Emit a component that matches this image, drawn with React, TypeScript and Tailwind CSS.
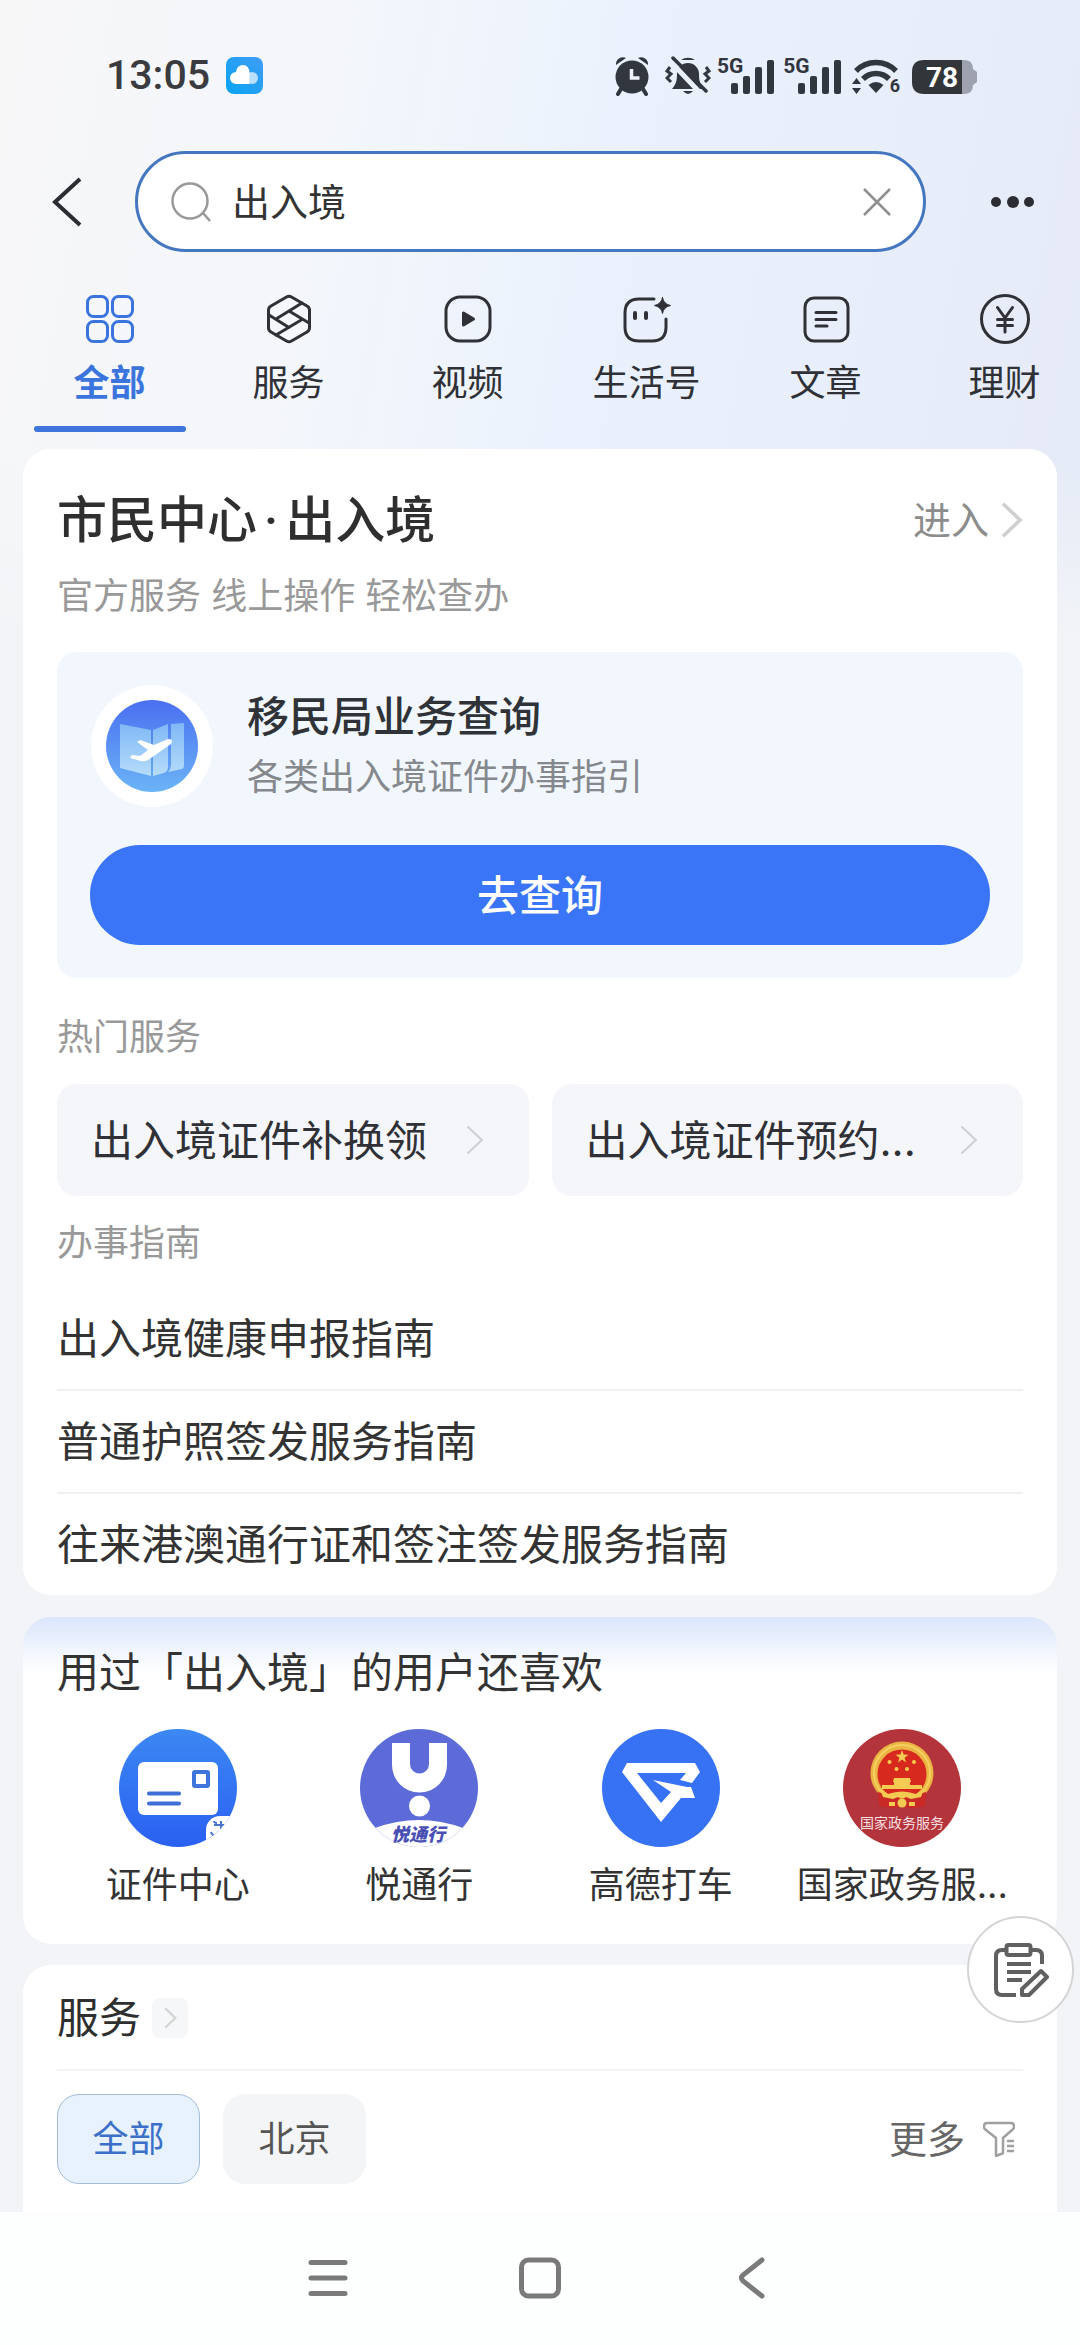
import { useState } from 'react';
import type { ReactNode } from 'react';

interface Tab {
  id: string;
  label: string;
  icon: ReactNode;
}

interface AppEntry {
  label: string;
  icon: ReactNode;
}

function AlarmIcon() {
  return (
    <svg viewBox="0 0 34 40" className="h-10 w-[34px]" aria-hidden="true">
      <circle cx="17" cy="21" r="16.500" fill="#32363f" />
      <path d="M1 9a7 7 0 0 1 10-7zM33 9a7 7 0 0 0-10-7z" fill="#32363f" />
      <path d="M6 33l-3 5M28 33l3 5" stroke="#32363f" strokeWidth="4" strokeLinecap="round" />
      <path d="M16.500 13v9h8" stroke="#eef2fb" strokeWidth="3.500" fill="none" />
    </svg>
  );
}

function MutedBellIcon() {
  return (
    <svg viewBox="0 0 46 40" className="h-10 w-[46px]" aria-hidden="true">
      <path d="M7 33c4-5 5-8 5-15a11 11 0 0 1 22 0c0 7 1 10 5 15z" fill="#32363f" />
      <path d="M18 35h10q-5 6-10 0z" fill="#32363f" />
      <path d="M16 4a12 12 0 0 1 14 0z" fill="#32363f" />
      <path d="M5 5l35 37" stroke="#e9effb" strokeWidth="5" />
      <path d="M8 2l33 33" stroke="#32363f" strokeWidth="3.500" strokeLinecap="round" />
      <path d="M5 11L2 15l4 3-4 4 4 4M41 11l3 4-4 3 4 4-4 4" stroke="#32363f" strokeWidth="3" fill="none" />
    </svg>
  );
}

function SignalIcon() {
  return (
    <div className="flex items-start">
      <span className="-mr-3 font-['Roboto',sans-serif] text-[21px] font-bold leading-5 text-[#32363f]">5G</span>
      <svg viewBox="0 0 44 40" className="h-10 w-11" fill="#32363f" aria-hidden="true">
        <rect x="0" y="27" width="7" height="11" rx="2" />
        <rect x="12" y="20" width="7" height="18" rx="2" />
        <rect x="24" y="11" width="7" height="27" rx="2" />
        <rect x="36" y="4" width="7" height="34" rx="2" />
      </svg>
    </div>
  );
}

function WifiIcon() {
  return (
    <div className="flex items-end">
      <svg viewBox="0 0 48 40" className="h-10 w-12" aria-hidden="true">
        <path d="M4 15a28 28 0 0 1 40 0" stroke="#32363f" strokeWidth="5.500" fill="none" />
        <path d="M11 23a18 18 0 0 1 26 0" stroke="#32363f" strokeWidth="5.500" fill="none" />
        <path d="M16.500 29q7.500-6 15 0L24 37z" fill="#32363f" />
        <path d="M0 28l4.500-6L9 28zM0 32h9l-4.500 6z" fill="#32363f" />
      </svg>
      <span className="-ml-2.5 font-['Roboto',sans-serif] text-[18px] font-bold leading-5 text-[#32363f]">6</span>
    </div>
  );
}

function BatteryIcon() {
  return (
    <svg viewBox="0 0 65 40" className="h-10 w-[65px]" aria-hidden="true">
      <path d="M50 4h2q9 0 9 9l4 3v10l-4 3q0 9-9 9h-2z" fill="#9da2ae" />
      <path d="M12 4h38v34H12Q0 38 0 26V16Q0 4 12 4z" fill="#32363b" />
      <text x="30" y="31" textAnchor="middle" fontSize="28" fontWeight="700" fill="#fff" className="font-['Roboto',sans-serif]">78</text>
    </svg>
  );
}

function CloudBadge() {
  return (
    <svg viewBox="0 0 37 37" className="size-[37px]" aria-hidden="true">
      <defs>
        <linearGradient id="cloud-bg" x1="0" y1="1" x2="1" y2="0">
          <stop offset="0" stopColor="#0aa4f2" />
          <stop offset="1" stopColor="#3f9cf5" />
        </linearGradient>
      </defs>
      <rect width="37" height="37" rx="8" fill="url(#cloud-bg)" />
      <rect x="20" y="15" width="12" height="12" rx="6" fill="#b9dffb" />
      <path d="M10 27a6 6 0 0 1 0-12q1-7 7-7 6 0 6.500 8V27z" fill="#fff" />
    </svg>
  );
}

function Chevron({ className, width = 2 }: { className: string; width?: number }) {
  return (
    <svg viewBox="0 0 12 20" className={className} fill="none" stroke="currentColor" strokeWidth={width} aria-hidden="true">
      <path d="M1 1l9.500 9L1 19" />
    </svg>
  );
}

const TABS: Tab[] = [
  {
    id: 'all',
    label: '全部',
    icon: (
      <>
        <rect x="2.500" y="2.500" width="20" height="20" rx="6" />
        <rect x="27.500" y="2.500" width="20" height="20" rx="6" />
        <rect x="2.500" y="27.500" width="20" height="20" rx="6" />
        <rect x="27.500" y="27.500" width="20" height="20" rx="6" />
      </>
    ),
  },
  {
    id: 'service',
    label: '服务',
    icon: (
      <>
        <path d="M22.500 3q2.500-1.500 5 0l15.500 9q2.500 1.500 2.500 4v18q0 2.500-2.500 4l-15.500 9q-2.500 1.500-5 0L7 38q-2.500-1.500-2.500-4V16q0-2.500 2.500-4z" />
        <path d="M38 9L12 25M5 21l20 12.500M25 17l20 12M38 25.500L12 41" />
      </>
    ),
  },
  {
    id: 'video',
    label: '视频',
    icon: (
      <>
        <rect x="3" y="3" width="44" height="44" rx="14" />
        <path d="M20.500 19v12l10-6z" fill="currentColor" />
      </>
    ),
  },
  {
    id: 'life',
    label: '生活号',
    icon: (
      <>
        <path d="M32 5H17Q3 5 3 19v14q0 14 14 14h13q14 0 14-14v-8" />
        <path d="M13 19v5M24 19v5" strokeWidth="4" />
        <path d="M40.500 3.500q1 6.500 8 8-7 1.500-8 8-1-6.500-8-8 7-1.500 8-8z" fill="currentColor" strokeWidth="1" />
      </>
    ),
  },
  {
    id: 'article',
    label: '文章',
    icon: (
      <>
        <rect x="4" y="4" width="43" height="43" rx="9" />
        <path d="M15 18.500h20M15 25.500h20M15 32h11" />
      </>
    ),
  },
  {
    id: 'finance',
    label: '理财',
    icon: (
      <>
        <circle cx="25" cy="25" r="23.500" />
        <path d="M17.500 13.500L25 24l7.500-10.500M25 24v14M17.500 25.500h15M17.500 31.500h15" />
      </>
    ),
  },
];

function MapBadge() {
  return (
    <svg viewBox="0 0 124 124" className="size-[124px] shrink-0" aria-hidden="true">
      <defs>
        <linearGradient id="map-bg" x1="0" y1="0" x2="0" y2="1">
          <stop offset="0" stopColor="#4a6ff0" />
          <stop offset="1" stopColor="#6bb4f6" />
        </linearGradient>
        <linearGradient id="map-leaf" x1="0" y1="0" x2="0" y2="1">
          <stop offset="0" stopColor="#7fb8f6" />
          <stop offset="1" stopColor="#b6dcfa" />
        </linearGradient>
      </defs>
      <circle cx="62" cy="62" r="61" fill="#fff" />
      <circle cx="62" cy="62" r="46" fill="url(#map-bg)" />
      <path d="M30 40l31 6v46l-31-8zM63 46l15-6v44q-1 4-4 5l-11 3zM81 40l13-1v43q0 2-2 3l-14 3q3-3 3-7z" fill="url(#map-leaf)" />
      <path d="M47 58q3-3 6-1l11 4 14-6q6 0 3 5L58 76q-4 2-7 1l-11-3 2-3 8 1 8-6z" fill="#fff" />
    </svg>
  );
}

function CardCenterIcon() {
  return (
    <svg viewBox="0 0 118 118" className="size-[118px]" aria-hidden="true">
      <defs>
        <linearGradient id="card-bg" x1="0" y1="0" x2="0" y2="1">
          <stop offset="0" stopColor="#3c88f3" />
          <stop offset="1" stopColor="#2a60f2" />
        </linearGradient>
        <clipPath id="card-clip">
          <circle cx="59" cy="59" r="59" />
        </clipPath>
      </defs>
      <g clipPath="url(#card-clip)">
        <rect width="118" height="118" fill="url(#card-bg)" />
        <rect x="19" y="33" width="80" height="53" rx="6" fill="#fff" />
        <rect x="75" y="43" width="14" height="14" rx="1" fill="#fff" stroke="#3f74dc" strokeWidth="4" />
        <path d="M30 64.500h30M30 74.500h30" stroke="#3f6fd6" strokeWidth="4" strokeLinecap="round" />
        <rect x="87" y="87" width="44" height="44" rx="14" fill="#fff" />
        <path d="M95 96h10M102 92v9M95 92q0 2 3 2M92 103q1 4 6 4" stroke="#4a73d0" strokeWidth="2" fill="none" />
      </g>
    </svg>
  );
}

function YuetongIcon() {
  return (
    <svg viewBox="0 0 118 118" className="size-[118px]" aria-hidden="true">
      <defs>
        <clipPath id="yue-clip">
          <circle cx="59" cy="59" r="59" />
        </clipPath>
      </defs>
      <g clipPath="url(#yue-clip)">
        <rect width="118" height="118" fill="#5c6bd8" />
        <path d="M0 118v-10l15-9q44-16 88 0l15 9v10z" fill="#fff" />
      </g>
      <path d="M32 14h18v21a9.500 9.500 0 0 0 19 0V14h18v22a27.500 27.500 0 0 1-55 0z" fill="#fff" />
      <circle cx="59.500" cy="77" r="10.500" fill="#fff" />
      <text x="58" y="112" textAnchor="middle" fontSize="18" fontWeight="900" fontStyle="italic" fill="#4a4fb4">悦通行</text>
    </svg>
  );
}

function GaodeIcon() {
  return (
    <svg viewBox="0 0 118 118" className="size-[118px]" aria-hidden="true">
      <circle cx="59" cy="59" r="59" fill="#3672f3" />
      <path d="M25 34h68l5 9-8 11-12-3 6-7H35l24 30 10-11-18-12 34 7h4l4 11H79L59 93 20 43z" fill="#fff" />
    </svg>
  );
}

function GovIcon() {
  return (
    <svg viewBox="0 0 118 118" className="size-[118px]" aria-hidden="true">
      <circle cx="59" cy="59" r="59" fill="#b3343b" />
      <circle cx="59" cy="44" r="31.500" fill="#eab543" />
      <circle cx="59" cy="44" r="28" fill="none" stroke="#f5d060" strokeWidth="2" />
      <path d="M35 63l10 3h28l10-3-1 14-11 2-12-1-12 1-11-2z" fill="#c92a26" />
      <circle cx="59" cy="45" r="24.500" fill="#d8291f" />
      <g fill="#f3cb52">
        <path d="M59 21l1.600 4.600 4.900.1-3.900 3 1.400 4.700-4-2.800-4 2.800 1.400-4.700-3.900-3 4.900-.1z" />
        <circle cx="46.500" cy="33" r="2" />
        <circle cx="71" cy="33" r="2" />
        <circle cx="53.500" cy="40" r="2" />
        <circle cx="64" cy="40" r="2" />
        <path d="M51 49h16l1 4h-1v3h12v4H39v-4h12v-3h-1z" />
        <path d="M37 60l8 5q14-5 28 0l8-5-3 8-10 2-5-2q-4 3-8 0l-5 2-10-2z" />
        <path d="M46 73h6v4h-6zM66 73h6v4h-6z" />
        <circle cx="59" cy="74" r="4.500" />
      </g>
      <text x="59" y="99" textAnchor="middle" fontSize="14" fill="#f6dfe0">国家政务服务</text>
    </svg>
  );
}

const GUIDES = ['出入境健康申报指南', '普通护照签发服务指南', '往来港澳通行证和签注签发服务指南'];

const HOT_SERVICES = ['出入境证件补换领', '出入境证件预约...'];

const RELATED: AppEntry[] = [
  { label: '证件中心', icon: <CardCenterIcon /> },
  { label: '悦通行', icon: <YuetongIcon /> },
  { label: '高德打车', icon: <GaodeIcon /> },
  { label: '国家政务服...', icon: <GovIcon /> },
];

const REGIONS = ['全部', '北京'];

function StatusBar() {
  return (
    <div className="flex h-[151px] items-center justify-between pl-[106px] pr-[103px]">
      <div className="flex items-center gap-4">
        <span className="font-['Roboto',sans-serif] text-[41px] font-medium leading-none text-[#3a3b3f]">13:05</span>
        <CloudBadge />
      </div>
      <div className="flex items-center">
        <AlarmIcon />
        <div className="ml-4 mr-1.5">
          <MutedBellIcon />
        </div>
        <div className="mr-2.5 flex gap-2">
          <SignalIcon />
          <SignalIcon />
        </div>
        <WifiIcon />
        <div className="ml-3">
          <BatteryIcon />
        </div>
      </div>
    </div>
  );
}

function SearchRow() {
  const [query, setQuery] = useState('出入境');

  return (
    <div className="flex h-[101px] items-center">
      <button type="button" aria-label="返回" className="flex w-[135px] shrink-0 items-center pl-[52px]">
        <svg viewBox="0 0 30 50" className="h-[50px] w-[30px]" fill="none" stroke="#2b2d33" strokeWidth="4" aria-hidden="true">
          <path d="M28 2L3 25l25 23" />
        </svg>
      </button>
      <form
        onSubmit={(e) => e.preventDefault()}
        className="flex h-full min-w-0 flex-1 items-center rounded-full border-[3px] border-[#4577c0] bg-white pl-[33px] pr-8"
      >
        <svg viewBox="0 0 40 40" className="size-10 shrink-0" fill="none" stroke="#999" strokeWidth="2.500" aria-hidden="true">
          <circle cx="19" cy="19" r="17.500" />
          <path d="M32 31l7 8" />
        </svg>
        <input
          type="text"
          aria-label="搜索"
          value={query}
          onChange={(e) => setQuery(e.target.value)}
          className="ml-[21px] h-14 min-w-0 flex-1 bg-transparent text-[38px] leading-[56px] text-[#333] outline-none"
        />
        <button type="button" aria-label="清除" onClick={() => setQuery('')}>
          <svg viewBox="0 0 28 28" className="size-7" stroke="#8f8f8f" strokeWidth="2.500" aria-hidden="true">
            <path d="M1 1l26 26M27 1L1 27" />
          </svg>
        </button>
      </form>
      <button type="button" aria-label="更多选项" className="flex w-[154px] shrink-0 items-center pl-16">
        <svg viewBox="0 0 46 14" className="h-3.5 w-[46px]" fill="#2b2d33" aria-hidden="true">
          <circle cx="6" cy="7" r="5" />
          <circle cx="23" cy="7" r="6" />
          <circle cx="39" cy="7" r="5" />
        </svg>
      </button>
    </div>
  );
}

function TabBar() {
  const [active, setActive] = useState('all');

  return (
    <nav className="flex overflow-hidden pl-5 pt-[42px]">
      {TABS.map((tab) => {
        const on = tab.id === active;
        return (
          <button
            key={tab.id}
            type="button"
            onClick={() => setActive(tab.id)}
            className={`flex w-[179px] shrink-0 flex-col items-center ${on ? 'font-bold text-[#3b74dc]' : 'text-[#2f3137]'}`}
          >
            <svg
              viewBox="0 0 50 50"
              className="size-[50px]"
              fill="none"
              stroke="currentColor"
              strokeWidth="3"
              strokeLinecap="round"
              strokeLinejoin="round"
              aria-hidden="true"
            >
              {tab.icon}
            </svg>
            <span className="mt-[17px] text-[36px] leading-[44px]">{tab.label}</span>
            <span className={`mt-[21px] h-1.5 w-[152px] rounded-full ${on ? 'bg-[#3f74dc]' : 'bg-transparent'}`} />
          </button>
        );
      })}
    </nav>
  );
}

function CitizenCard() {
  return (
    <section className="mt-[17px] rounded-[28px] bg-white px-[34px] pt-[41px]">
      <div className="flex items-center justify-between">
        <h2 className="text-[50px] font-medium leading-[60px] text-[#2f2f2f]">
          市民中心<span className="px-[7px] font-['Roboto',sans-serif] leading-none">·</span>出入境
        </h2>
        <a href="#citizen" className="flex items-center gap-3 text-[38px] leading-[52px] text-[#8c8c8c]">
          进入
          <Chevron className="h-9 w-[22px] text-[#cfcfcf]" />
        </a>
      </div>
      <p className="mt-[22px] text-[36px] leading-[48px] text-[#999]">官方服务 线上操作 轻松查办</p>

      <div className="mt-8 rounded-[20px] bg-[#f2f7fe] px-[33px] pb-[33px] pt-8">
        <div className="flex items-center gap-[33px]">
          <MapBadge />
          <div>
            <h3 className="text-[42px] font-medium leading-[52px] text-[#2f3338]">移民局业务查询</h3>
            <p className="mt-2.5 text-[36px] leading-[48px] text-[#85888c]">各类出入境证件办事指引</p>
          </div>
        </div>
        <button type="button" className="mt-[37px] h-[100px] w-full rounded-full bg-[#3975f6] text-[42px] font-medium text-white">
          去查询
        </button>
      </div>

      <h3 className="mt-[35px] text-[36px] leading-[48px] text-[#999]">热门服务</h3>
      <div className="mt-[23px] grid grid-cols-2 gap-[23px]">
        {HOT_SERVICES.map((name) => (
          <a key={name} href="#hot" className="flex h-28 items-center justify-between rounded-[20px] bg-[#f5f6fa] pl-[34px] pr-[45px] text-[42px] text-[#2f3137]">
            {name}
            <Chevron className="h-[30px] w-[18px] text-[#cfd1d4]" width={1.5} />
          </a>
        ))}
      </div>

      <h3 className="mt-[23px] text-[36px] leading-[48px] text-[#999]">办事指南</h3>
      <ul className="mt-[21px]">
        {GUIDES.map((guide) => (
          <li key={guide} className="border-b-2 border-[#f0f0f0] last:border-b-0">
            <a href="#guide" className="flex h-[101px] items-center text-[42px] text-[#333]">{guide}</a>
          </li>
        ))}
      </ul>
    </section>
  );
}

function RelatedCard() {
  return (
    <section className="mt-[22px] rounded-[28px] bg-white bg-[linear-gradient(180deg,#dbe6fc_0px,#ffffff_56px)] px-[34px] pb-[35px] pt-[30px]">
      <h2 className="text-[42px] leading-[52px] text-[#333]">用过「出入境」的用户还喜欢</h2>
      <div className="mt-[30px] grid grid-cols-4">
        {RELATED.map((app) => (
          <a key={app.label} href="#app" className="flex flex-col items-center gap-3.5 whitespace-nowrap text-[36px] leading-[48px] text-[#333]">
            {app.icon}
            {app.label}
          </a>
        ))}
      </div>
    </section>
  );
}

function ServiceCard() {
  const [region, setRegion] = useState('全部');

  return (
    <section className="mt-[21px] rounded-t-[28px] bg-white px-[34px] pb-7 pt-[27px]">
      <div className="border-b-2 border-[#f2f3f4] pb-[25px]">
        <a href="#service" className="inline-flex items-center gap-[11px] align-top text-[42px] leading-[52px] text-[#2f2f2f]">
          服务
          <span className="flex h-10 w-9 items-center justify-center rounded-lg bg-[#f6f7f8]">
            <Chevron className="h-[22px] w-[13px] text-[#d3d3d3]" />
          </span>
        </a>
      </div>
      <div className="mt-[23px] flex items-center gap-[23px]">
        {REGIONS.map((name) => (
          <button
            key={name}
            type="button"
            onClick={() => setRegion(name)}
            className={`h-[90px] w-[143px] rounded-[22px] text-[36px] ${
              name === region ? 'border border-[#a3bbd9] bg-[#e8f2fe] text-[#3c70c8]' : 'bg-[#f3f5f6] text-[#555]'
            }`}
          >
            {name}
          </button>
        ))}
        <button type="button" className="ml-auto mr-2 flex items-center gap-[18px] text-[38px] leading-[52px] text-[#666]">
          更多
          <svg viewBox="0 0 32 36" className="h-9 w-8" fill="none" stroke="#a0a0a0" strokeWidth="2.500" strokeLinejoin="round" aria-hidden="true">
            <path d="M4 2h24q3 0 3 3v1q0 2-2 3l-9 8v14q0 2-2 2l-5 2V17L3 9Q1 8 1 6V5q0-3 3-3z" />
            <path d="M24 20h7M24 25h7M24 30h7" />
          </svg>
        </button>
      </div>
    </section>
  );
}

function SystemNav() {
  return (
    <nav className="flex h-[133px] items-center justify-center gap-[168px] bg-[#fdfefe] text-[#7a7a7a]">
      <button type="button" aria-label="最近任务">
        <svg viewBox="0 0 44 44" className="size-11" stroke="currentColor" strokeWidth="5" strokeLinecap="round" aria-hidden="true">
          <path d="M5 5.500h34M5 21h34M5 36.500h34" />
        </svg>
      </button>
      <button type="button" aria-label="主屏幕">
        <svg viewBox="0 0 44 44" className="size-11" fill="none" stroke="currentColor" strokeWidth="5" aria-hidden="true">
          <rect x="3.500" y="3" width="37" height="36" rx="7" />
        </svg>
      </button>
      <button type="button" aria-label="系统返回">
        <svg viewBox="0 0 44 44" className="size-11" fill="none" stroke="currentColor" strokeWidth="5" strokeLinecap="round" aria-hidden="true">
          <path d="M32 3L13 18q-3 3 0 6l19 15" />
        </svg>
      </button>
    </nav>
  );
}

export default function App() {
  return (
    <div className="flex min-h-screen flex-col bg-[#f2f4f7] bg-[linear-gradient(180deg,transparent_460px,#f2f4f7_640px),linear-gradient(100deg,#f7f7f8_0%,#f3f6fb_25%,#eaf1fd_45%,#e6ebf7_75%,#dce8f8_100%)] font-['Inter','Noto_Sans_CJK_SC',sans-serif]">
      <header>
        <StatusBar />
        <SearchRow />
        <TabBar />
      </header>
      <main className="flex-1 px-[23px]">
        <CitizenCard />
        <RelatedCard />
        <ServiceCard />
      </main>
      <SystemNav />

      <button
        type="button"
        aria-label="反馈"
        className="fixed bottom-[322px] right-[6px] flex size-[107px] items-center justify-center rounded-full border-2 border-[#d4d4d6] bg-white"
      >
        <svg viewBox="0 0 56 56" className="size-14" fill="none" stroke="#606060" strokeWidth="4" aria-hidden="true">
          <path d="M13 8H9q-6 0-6 6v33q0 6 6 6h14M38 8h5q6 0 6 6v8" />
          <rect x="13.500" y="3" width="24" height="10" rx="2" />
          <path d="M14 22h24M14 30h24M14 38h15" />
          <path d="M48 29l6 6-18 18h-7v-6z" strokeLinejoin="round" />
        </svg>
      </button>
    </div>
  );
}
